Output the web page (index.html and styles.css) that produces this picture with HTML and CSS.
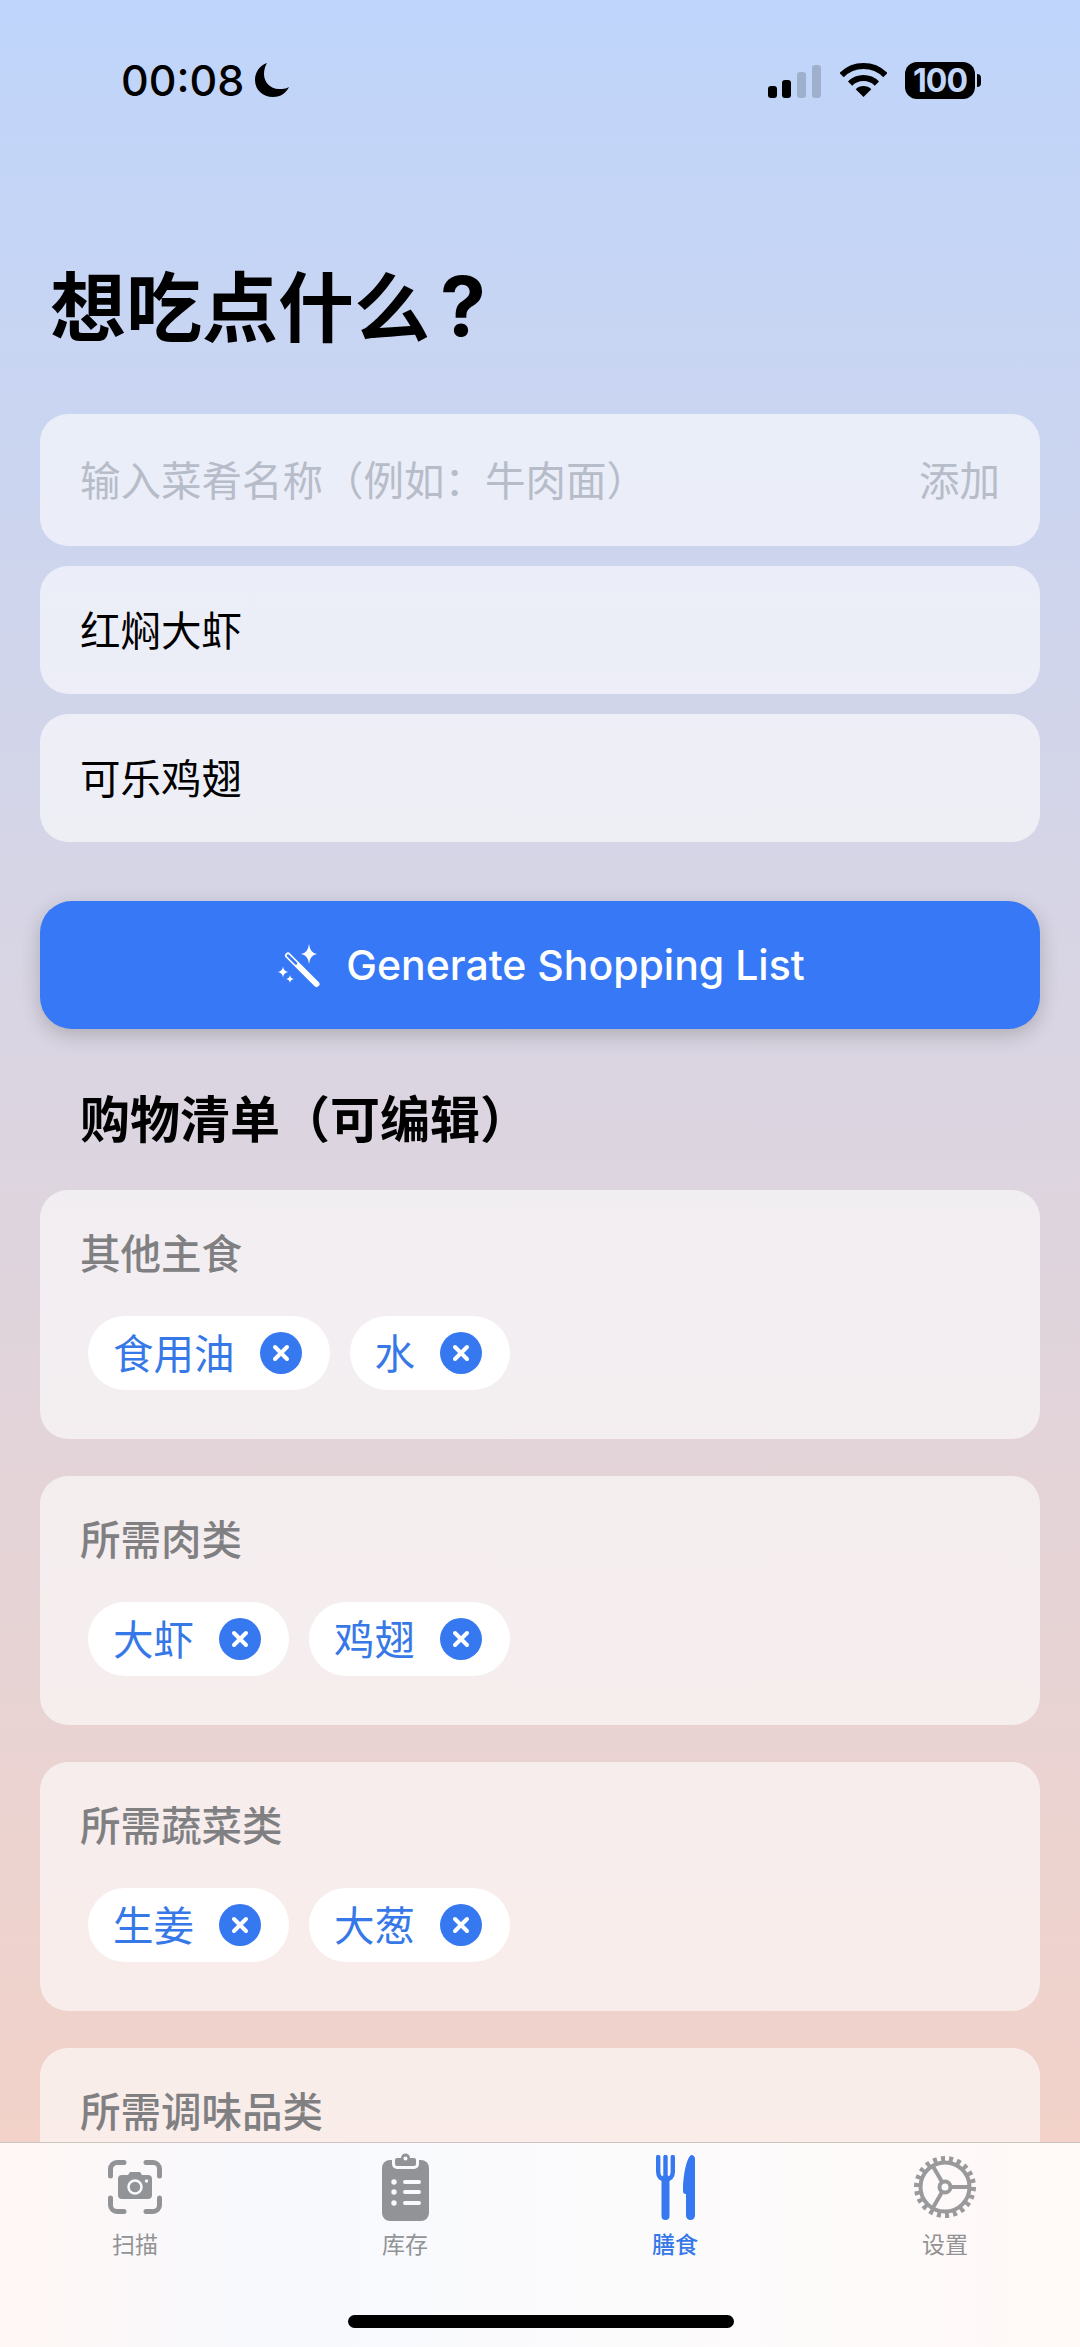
FILE: index.html
```html
<!DOCTYPE html>
<html lang="zh-CN">
<head>
  <meta charset="UTF-8" />
  <meta name="viewport" content="width=device-width, initial-scale=1.0"/>
  <title>膳食</title>
  <link rel="stylesheet" href="styles.css">
</head>
<body>
  <div class="app">
    <div class="content">
      <div class="status-bar">
        <div class="status-left">
          <span class="time">00:08</span>
          <svg class="moon" viewBox="0 0 34 34"><path d="M12 0C5 2 0 9 0 17c0 10 8 17 18 17 8 0 13-4 16-10-3 2-7 2-10 2C15 26 9 19 9 11c0-4 1-8 3-11z"/></svg>
        </div>
        <div class="status-right">
          <svg class="signal" viewBox="0 0 53 33">
            <rect x="0" y="21" width="9" height="12" rx="3"/>
            <rect x="14" y="15" width="9" height="18" rx="3"/>
            <rect class="off" x="29" y="7" width="9" height="26" rx="3"/>
            <rect class="off" x="44" y="0" width="9" height="33" rx="3"/>
          </svg>
          <svg class="wifi" viewBox="0 0 47 34">
            <path class="arc" d="M1.6 12.1A31 31 0 0 1 45.4 12.1"/>
            <path class="arc" d="M10.1 20.6A19 19 0 0 1 36.9 20.6"/>
            <path d="M23.5 34L15.7 26.2A11 11 0 0 1 31.3 26.2z"/>
          </svg>
          <div class="battery">100</div>
        </div>
      </div>

      <h1>想吃点什么<span class="title-mark">?</span></h1>

      <div class="input-card">
        <span class="placeholder">输入菜肴名称（例如：牛肉面）</span>
        <span class="add">添加</span>
      </div>
      <div class="dish">红焖大虾</div>
      <div class="dish">可乐鸡翅</div>

      <button class="generate">
        <svg class="wand" viewBox="0 0 42 42">
          <path class="wand-body" d="M10 11.500L38.500 40"/>
          <path class="wand-hole" d="M10 11.500L18 19.500"/>
          <path class="star" d="M31 0Q32 9 39 10Q32 11 31 20Q30 11 23 10Q30 9 31 0z"/>
          <path class="star" d="M5 22.500Q5.600 27.400 10.500 28Q5.600 28.600 5 33.500Q4.400 28.600-.5 28Q4.400 27.400 5 22.500z"/>
          <path class="star" d="M12 31Q12.400 34.600 16 35Q12.400 35.400 12 39Q11.600 35.400 8 35Q11.600 34.600 12 31z"/>
        </svg>
        Generate Shopping List
      </button>

      <h2>购物清单（可编辑）</h2>

      <section class="group">
        <div class="group-name">其他主食</div>
        <div class="chips">
          <div class="chip">食用油<svg class="chip-x" viewBox="0 0 42 42"><circle cx="21" cy="21" r="21"/><path d="M15 15L27 27M27 15L15 27"/></svg></div>
          <div class="chip">水<svg class="chip-x" viewBox="0 0 42 42"><circle cx="21" cy="21" r="21"/><path d="M15 15L27 27M27 15L15 27"/></svg></div>
        </div>
      </section>

      <section class="group">
        <div class="group-name">所需肉类</div>
        <div class="chips">
          <div class="chip">大虾<svg class="chip-x" viewBox="0 0 42 42"><circle cx="21" cy="21" r="21"/><path d="M15 15L27 27M27 15L15 27"/></svg></div>
          <div class="chip">鸡翅<svg class="chip-x" viewBox="0 0 42 42"><circle cx="21" cy="21" r="21"/><path d="M15 15L27 27M27 15L15 27"/></svg></div>
        </div>
      </section>

      <section class="group">
        <div class="group-name">所需蔬菜类</div>
        <div class="chips">
          <div class="chip">生姜<svg class="chip-x" viewBox="0 0 42 42"><circle cx="21" cy="21" r="21"/><path d="M15 15L27 27M27 15L15 27"/></svg></div>
          <div class="chip">大葱<svg class="chip-x" viewBox="0 0 42 42"><circle cx="21" cy="21" r="21"/><path d="M15 15L27 27M27 15L15 27"/></svg></div>
        </div>
      </section>

      <section class="group">
        <div class="group-name">所需调味品类</div>
      </section>
    </div>

    <nav class="tab-bar">
      <div class="tab">
        <div class="tab-icon">
          <svg class="icon-scan" viewBox="0 0 54 54">
            <path class="corners" d="M2.500 16V9a6.500 6.500 0 0 1 6.500-6.500H16M38 2.500h7a6.500 6.500 0 0 1 6.500 6.500V16M51.500 38v7a6.500 6.500 0 0 1-6.500 6.500H38M16 51.500H9a6.500 6.500 0 0 1-6.500-6.500V38"/>
            <path class="fill" d="M14 15h6l2-3h10l2 3h6a4 4 0 0 1 4 4v16a4 4 0 0 1-4 4H14a4 4 0 0 1-4-4V19a4 4 0 0 1 4-4z"/>
            <circle class="lens" cx="27" cy="27" r="6.500"/>
            <circle class="lens-dot" cx="38.500" cy="21" r="1.700"/>
          </svg>
        </div>
        <span>扫描</span>
      </div>
      <div class="tab">
        <div class="tab-icon">
          <svg class="icon-list" viewBox="0 0 47 68">
            <rect class="fill" x="0" y="7" width="47" height="61" rx="8"/>
            <rect class="clip-gap" x="10" y="2" width="27" height="14" rx="5"/>
            <path class="fill" d="M15 5h4a4.500 4.500 0 0 1 9 0h4a2 2 0 0 1 2 2v4a2 2 0 0 1-2 2H15a2 2 0 0 1-2-2V7a2 2 0 0 1 2-2z"/>
            <circle class="clip-gap-dot" cx="23.500" cy="5.500" r="2"/>
            <circle class="mark" cx="12" cy="29" r="2.700"/>
            <circle class="mark" cx="12" cy="39" r="2.700"/>
            <circle class="mark" cx="12" cy="50" r="2.700"/>
            <path class="lines" d="M23 29H37M23 39H37M23 50H37"/>
          </svg>
        </div>
        <span>库存</span>
      </div>
      <div class="tab active">
        <div class="tab-icon">
          <svg class="icon-food" viewBox="0 0 39 65">
            <path class="fork" d="M2.200 2V17c0 5 3 7.500 7.300 7.500s7.300-2.500 7.300-7.500V2M9.500 2V24"/>
            <path class="handle" d="M9.500 24V61"/>
            <path class="fill" d="M35 0c2.500 0 4 1.500 4 4v56.500a4.500 4.500 0 0 1-9 0V39h-.5c-1.500 0-2.500-1-2.500-3 0-14 3-32 8-36z"/>
          </svg>
        </div>
        <span>膳食</span>
      </div>
      <div class="tab">
        <div class="tab-icon">
          <svg class="icon-gear" viewBox="0 0 62 62">
            <circle class="teeth" cx="31" cy="31" r="28" pathLength="22"/>
            <circle class="ring" cx="31" cy="31" r="24.500"/>
            <path class="ring" d="M36 31H55M28.500 26.700L18.800 10M28.500 35.300L18.800 52"/>
            <circle class="hub" cx="31" cy="31" r="5.500"/>
          </svg>
        </div>
        <span>设置</span>
      </div>
      <div class="home-indicator"></div>
    </nav>
  </div>
</body>
</html>
```

FILE: styles.css
```css
* {
  box-sizing: border-box;
}

html, body {
  margin: 0;
  padding: 0;
}

body {
  width: 1080px;
  height: 2347px;
  overflow: hidden;
  font-family: Inter, "Noto Sans CJK SC", sans-serif;
  color: #000;
}

.app {
  height: 2347px;
  display: flex;
  flex-direction: column;
  background: linear-gradient(to bottom, #bfd5fb 0, #d9d5e3 1000px, #f2d2c9 2142px, #f2d2c9 100%);
}

.content {
  flex: 1;
  min-height: 0;
  overflow: hidden;
  padding: 0 40px;
}

/* status bar */
.status-bar {
  height: 60px;
  margin-top: 50px;
  padding: 0 65px 0 81px;
  display: flex;
  justify-content: space-between;
  align-items: center;
}

.status-left {
  display: flex;
  align-items: center;
  gap: 11px;
}

.time {
  font-size: 43px;
  font-weight: 500;
  line-height: 60px;
}

.moon {
  width: 34px;
  height: 34px;
}

.status-right {
  display: flex;
  align-items: center;
}

.signal {
  width: 53px;
  height: 33px;
  margin-right: 19px;
  margin-top: 3px;
}

.signal .off {
  fill: #9fb0cc;
}

.wifi {
  width: 47px;
  height: 34px;
  margin-right: 18px;
}

.wifi .arc {
  fill: none;
  stroke: #000;
  stroke-width: 6;
}

.battery {
  position: relative;
  width: 70px;
  height: 37px;
  border-radius: 12px;
  background: #000;
  color: #c0d5f8;
  font-size: 32px;
  font-weight: 700;
  line-height: 37px;
  text-align: center;
  letter-spacing: -1px;
}

.battery::after {
  content: "";
  position: absolute;
  right: -6px;
  top: 12px;
  width: 4px;
  height: 13px;
  border-radius: 0 4px 4px 0;
  background: #000;
}

/* headings */
h1 {
  margin: 152px 0 0 10px;
  font-size: 76px;
  line-height: 90px;
  font-weight: 700;
}

.title-mark {
  margin-left: 10px;
  font-size: 82px;
}

h2 {
  margin: 58px 0 0 40px;
  font-size: 50px;
  line-height: 66px;
  font-weight: 700;
}

/* input rows */
.input-card, .dish {
  border-radius: 28px;
  background: rgba(255, 255, 255, 0.6);
  padding: 0 40px 4px;
  display: flex;
  align-items: center;
  font-size: 40.5px;
}

.input-card {
  height: 132px;
  margin-top: 61px;
  justify-content: space-between;
}

.placeholder, .add {
  color: #b7bcc9;
}

.dish {
  height: 128px;
  margin-top: 20px;
}

/* main button */
.generate {
  width: 100%;
  height: 128px;
  margin-top: 59px;
  padding: 0 0 0 3px;
  border: none;
  border-radius: 32px;
  background: #3678f5;
  color: #fff;
  font-family: inherit;
  font-size: 41px;
  font-weight: 500;
  display: flex;
  align-items: center;
  justify-content: center;
  gap: 26px;
  box-shadow: 0 6px 20px rgba(0, 0, 0, 0.2);
}

.wand {
  width: 42px;
  height: 42px;
  overflow: visible;
}

.wand-body {
  stroke: #fff;
  stroke-width: 6;
  stroke-linecap: round;
  fill: none;
}

.wand-hole {
  stroke: #3678f5;
  stroke-width: 2.500;
  stroke-linecap: round;
  fill: none;
}

.star {
  fill: #fff;
}

/* shopping groups */
.group {
  height: 249px;
  margin-bottom: 37px;
  border-radius: 28px;
  background: rgba(255, 255, 255, 0.6);
  padding: 36px 40px 0;
}

h2 + .group {
  margin-top: 37px;
}

.group-name {
  font-size: 40.5px;
  line-height: 58px;
  font-weight: 500;
  color: #808083;
}

.chips {
  display: flex;
  gap: 20px;
  margin: 32px 0 0 8px;
}

.chip {
  height: 74px;
  padding: 0 28px 4px 25px;
  border-radius: 37px;
  background: #fff;
  color: #3678e8;
  font-size: 40.5px;
  display: flex;
  align-items: center;
  gap: 25px;
}

.chip-x {
  width: 42px;
  height: 42px;
  margin-top: 4px;
}

.chip-x circle {
  fill: #3678f0;
}

.chip-x path {
  stroke: #fff;
  stroke-width: 4;
  stroke-linecap: round;
  fill: none;
}

/* bottom tabs */
.tab-bar {
  position: relative;
  height: 205px;
  flex-shrink: 0;
  border-top: 1px solid #cdc4c0;
  background: linear-gradient(to right, #fff7f5 0, #f7f9fd 25%, #fcfbfc 60%, #fff9f7 100%);
  padding: 9px 0 0 0;
  display: grid;
  grid-template-columns: 270px 270px 270px 270px;
  align-items: start;
}

.tab {
  display: flex;
  flex-direction: column;
  align-items: center;
  font-size: 23px;
  line-height: 30px;
  color: #929396;
}

.tab.active {
  color: #3678e8;
  font-weight: 500;
}

.tab-icon {
  height: 70px;
  margin-bottom: 8px;
  display: flex;
  align-items: center;
  justify-content: center;
}

.icon-scan { width: 54px; height: 54px; }
.icon-list { width: 47px; height: 68px; }
.icon-food { width: 39px; height: 65px; }
.icon-gear { width: 62px; height: 62px; }

.tab-icon .fill {
  fill: #929396;
}

.tab.active .fill {
  fill: #3678f0;
}

.corners {
  fill: none;
  stroke: #929396;
  stroke-width: 5;
  stroke-linecap: round;
}

.lens {
  fill: none;
  stroke: #f7f9fd;
  stroke-width: 2.500;
}

.lens-dot, .mark, .clip-gap-dot {
  fill: #f7f9fd;
}

.clip-gap {
  fill: #f7f9fd;
}

.lines {
  stroke: #f7f9fd;
  stroke-width: 4;
  stroke-linecap: round;
  fill: none;
}

.fork {
  stroke: #3678f0;
  stroke-width: 4.400;
  stroke-linecap: round;
  fill: none;
}

.handle {
  stroke: #3678f0;
  stroke-width: 8;
  stroke-linecap: round;
  fill: none;
}

.teeth {
  fill: none;
  stroke: #9a9a9c;
  stroke-width: 6;
  stroke-dasharray: 0.5 0.5;
}

.ring {
  fill: none;
  stroke: #9a9a9c;
  stroke-width: 4;
}

.hub {
  fill: #fcfbfc;
  stroke: #9a9a9c;
  stroke-width: 4;
}

.home-indicator {
  position: absolute;
  left: 348px;
  top: 172px;
  width: 386px;
  height: 13px;
  border-radius: 7px;
  background: #000;
}
```
